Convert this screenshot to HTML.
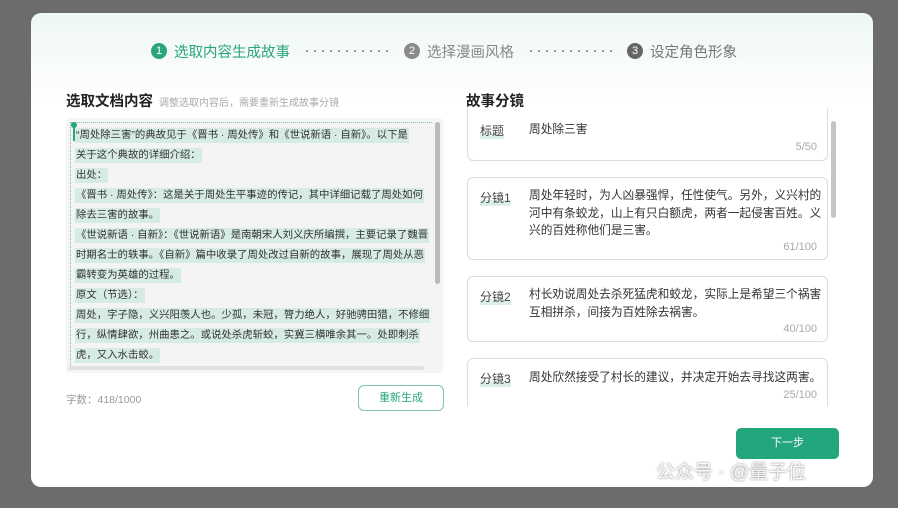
<!DOCTYPE html>
<html><head><meta charset="utf-8"><style>
*{margin:0;padding:0;box-sizing:border-box}
body{width:898px;height:508px;background:#6c6c6c;position:relative;overflow:hidden;font-family:"Liberation Sans","Noto Sans CJK SC",sans-serif;color:#333}
.dlg{position:absolute;left:31px;top:13px;width:842px;height:474px;border-radius:10px;background:linear-gradient(#eef7f4 0px,#ffffff 90px);overflow:hidden}
.a{position:absolute;white-space:nowrap}
.circ{position:absolute;width:16px;height:16px;border-radius:50%;color:#fff;font-size:11px;text-align:center;line-height:16px}
.dots{position:absolute;height:2px;background:repeating-linear-gradient(90deg,#999 0 2px,transparent 2px 8px)}
.ta{position:absolute;left:35px;top:105px;width:377px;height:255px;background:#f4f4f3;border-radius:4px;overflow:hidden}
.ta .in{position:absolute;left:4px;top:4px;width:362px;height:244px;border:1px dotted #7cc4ad;border-right:none;border-bottom:none}
.ln{position:absolute;left:9px;font-size:10.4px;background:#d6ebe3;color:#333;height:15px;line-height:15px;padding:0 1px;white-space:nowrap}
.card{position:absolute;left:436px;width:361px;background:#fff;border:1px solid #ddd;border-radius:6px}
.lab{position:absolute;left:12px;font-size:12px;color:#444;background:linear-gradient(transparent 65%,#dcefe7 65%)}
.txt{position:absolute;left:61px;font-size:11.7px;color:#333;line-height:17.5px;white-space:nowrap}
.cnt{position:absolute;right:10px;font-size:11px;color:#aaa}
</style></head><body>
<div class="dlg">
 <div class="circ" style="left:120px;top:30px;background:#2aa57e">1</div>
 <div class="a" style="left:143px;top:28px;font-size:14.5px;color:#2aa57e">选取内容生成故事</div>
 <div class="dots" style="left:275px;top:37px;width:82px"></div>
 <div class="circ" style="left:373px;top:30px;background:#8a8a8a">2</div>
 <div class="a" style="left:396px;top:28px;font-size:14.5px;color:#888">选择漫画风格</div>
 <div class="dots" style="left:499px;top:37px;width:82px"></div>
 <div class="circ" style="left:596px;top:30px;background:#666">3</div>
 <div class="a" style="left:619px;top:28px;font-size:14.5px;color:#777">设定角色形象</div>

 <div class="a" style="left:35px;top:77px;font-size:14.5px;font-weight:bold;color:#222">选取文档内容</div>
 <div class="a" style="left:128px;top:81px;font-size:10px;color:#aaa">调整选取内容后，需要重新生成故事分镜</div>
 <div class="ta"><div class="in"></div>
  <div style="position:absolute;left:7px;top:5px;width:2px;height:18px;background:#2aa57e"></div>
  <div style="position:absolute;left:5px;top:4px;width:6px;height:6px;border-radius:50%;background:#2aa57e"></div>
  <div class="ln" style="top:10px">“周处除三害”的典故见于《晋书 · 周处传》和《世说新语 · 自新》。以下是</div>
  <div class="ln" style="top:30px">关于这个典故的详细介绍：</div>
  <div class="ln" style="top:50px">出处：</div>
  <div class="ln" style="top:70px">《晋书 · 周处传》：这是关于周处生平事迹的传记，其中详细记载了周处如何</div>
  <div class="ln" style="top:90px">除去三害的故事。</div>
  <div class="ln" style="top:110px">《世说新语 · 自新》：《世说新语》是南朝宋人刘义庆所编撰，主要记录了魏晋</div>
  <div class="ln" style="top:130px">时期名士的轶事。《自新》篇中收录了周处改过自新的故事，展现了周处从恶</div>
  <div class="ln" style="top:150px">霸转变为英雄的过程。</div>
  <div class="ln" style="top:170px">原文（节选）：</div>
  <div class="ln" style="top:190px">周处，字子隐，义兴阳羡人也。少孤，未冠，膂力绝人，好驰骋田猎，不修细</div>
  <div class="ln" style="top:210px">行，纵情肆欲，州曲患之。或说处杀虎斩蛟，实冀三横唯余其一。处即刺杀</div>
  <div class="ln" style="top:230px">虎，又入水击蛟。</div>
  <div style="position:absolute;right:3px;top:4px;width:5px;height:162px;border-radius:3px;background:#bbb"></div>
  <div style="position:absolute;left:2px;top:248px;width:356px;height:4px;border-radius:2px;background:#e0e0e0"></div>
 </div>
 <div class="a" style="left:35px;top:379px;font-size:10.5px;color:#999">字数：418/1000</div>
 <div class="a" style="left:327px;top:372px;width:86px;height:26px;border:1px solid #7cc4ad;border-radius:6px;color:#2aa57e;font-size:11px;text-align:center;line-height:24px">重新生成</div>

 <div class="a" style="left:435px;top:77px;font-size:14.5px;font-weight:bold;color:#222">故事分镜</div>
 <div class="card" style="top:95px;height:53px;border-top:none;border-radius:0 0 6px 6px">
  <div class="lab" style="top:14px">标题</div><div class="txt" style="top:13px">周处除三害</div><div class="cnt" style="top:33px">5/50</div></div>
 <div class="card" style="top:164px;height:83px">
  <div class="lab" style="top:11px">分镜1</div><div class="txt" style="top:9px">周处年轻时，为人凶暴强悍，任性使气。另外，义兴村的<br>河中有条蛟龙，山上有只白额虎，两者一起侵害百姓。义<br>兴的百姓称他们是三害。</div><div class="cnt" style="top:63px">61/100</div></div>
 <div class="card" style="top:263px;height:66px">
  <div class="lab" style="top:11px">分镜2</div><div class="txt" style="top:9px">村长劝说周处去杀死猛虎和蛟龙，实际上是希望三个祸害<br>互相拼杀，间接为百姓除去祸害。</div><div class="cnt" style="top:46px">40/100</div></div>
 <div class="card" style="top:345px;height:48px;border-bottom:none;border-radius:6px 6px 0 0">
  <div class="lab" style="top:11px">分镜3</div><div class="txt" style="top:10px">周处欣然接受了村长的建议，并决定开始去寻找这两害。</div><div class="cnt" style="top:30px">25/100</div></div>
 <div style="position:absolute;left:800px;top:108px;width:5px;height:97px;border-radius:3px;background:#c4c4c4"></div>
 <div class="a" style="left:705px;top:415px;width:103px;height:31px;background:#23a67d;border-radius:5px;color:#fff;font-size:11px;text-align:center;line-height:31px">下一步</div>
 <div class="a" style="left:625px;top:444px;font-size:19px;color:rgba(255,255,255,0.9);text-shadow:0 0 2px #777">公众号 · @量子位</div>
</div>
</body></html>
